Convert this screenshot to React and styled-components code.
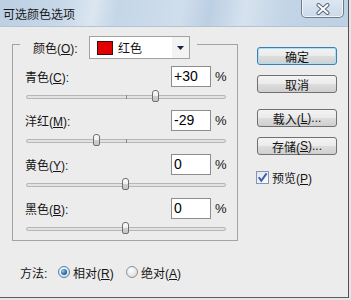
import React from 'react'
import styled, { createGlobalStyle, css } from 'styled-components'

const GlobalStyle = createGlobalStyle`
  html, body {
    margin: 0;
    padding: 0;
    background: #e4e4e4;
  }
  body {
    font-family: "Liberation Sans", "Noto Sans CJK SC", sans-serif;
    font-size: 12px;
    color: #141414;
  }
  u {
    text-decoration: underline;
    text-underline-offset: 1px;
  }
`

const rows = [
  { label: '青色', key: 'C', value: 30 },
  { label: '洋红', key: 'M', value: -29 },
  { label: '黄色', key: 'Y', value: 0 },
  { label: '黑色', key: 'B', value: 0 },
]

const formatValue = (v) => (v > 0 ? `+${v}` : `${v}`)

const App = () => {
  return (
    <>
      <GlobalStyle />
      <Window>
        <TitleBar>
          <Title>可选颜色选项</Title>
          <CloseButton>
            <svg width="16" height="12" viewBox="0 0 16 12">
              <path d="M3.5 2 L12.5 10 M12.5 2 L3.5 10" stroke="#56677b" strokeWidth="4" strokeLinecap="round" fill="none" />
              <path d="M3.5 2 L12.5 10 M12.5 2 L3.5 10" stroke="#ffffff" strokeWidth="2" strokeLinecap="round" fill="none" />
            </svg>
          </CloseButton>
        </TitleBar>

        <Body>
          <LeftCol>
            <Group>
              <Legend>
                <LegendLabel>颜色(<u>O</u>):</LegendLabel>
                <Select>
                  <Swatch />
                  <SelectText>红色</SelectText>
                  <Arrow>
                    <svg width="7" height="4" viewBox="0 0 7 4">
                      <path d="M0 0 L7 0 L3.5 4 Z" fill="#15254a" />
                    </svg>
                  </Arrow>
                </Select>
              </Legend>

              {rows.map((r) => (
                <Row key={r.key}>
                  <TopLine>
                    <RowLabel>{r.label}(<u>{r.key}</u>):</RowLabel>
                    <NumberBox>{formatValue(r.value)}</NumberBox>
                    <Percent>%</Percent>
                  </TopLine>
                  <Slider>
                    <Track />
                    <Thumb style={{ left: 96 + r.value }} />
                  </Slider>
                </Row>
              ))}
            </Group>

            <MethodRow>
              <MethodLabel>方法:</MethodLabel>
              <Option>
                <Radio $checked />
                <span>相对(<u>R</u>)</span>
              </Option>
              <Option>
                <Radio />
                <span>绝对(<u>A</u>)</span>
              </Option>
            </MethodRow>
          </LeftCol>

          <RightCol>
            <Button $default>确定</Button>
            <Button $gap={10}>取消</Button>
            <Button $gap={16}>载入(<u>L</u>)...</Button>
            <Button $gap={10}>存储(<u>S</u>)...</Button>
            <CheckRow>
              <CheckBox>
                <svg width="11" height="11" viewBox="0 0 11 11">
                  <path d="M1.8 5.2 L4.3 8.8 L9.6 1.4" stroke="#3a5fae" strokeWidth="2" fill="none" />
                </svg>
              </CheckBox>
              <span>预览(<u>P</u>)</span>
            </CheckRow>
          </RightCol>
        </Body>
      </Window>
    </>
  )
}

const Window = styled.div`
  width: 349px;
  height: 298px;
  box-sizing: border-box;
  background: #ececec;
  border-right: 1px solid #4e5256;
  border-bottom: 1px solid #5b5e62;
  display: flex;
  flex-direction: column;
  overflow: hidden;
`

const TitleBar = styled.div`
  height: 27px;
  box-sizing: border-box;
  display: flex;
  justify-content: space-between;
  align-items: flex-start;
  padding: 0 4px 0 3px;
  border-bottom: 1px solid #b2c3d4;
  background: linear-gradient(
    100deg,
    #bccfe3 0%,
    #c7d8e9 18%,
    #dbe6f0 27%,
    #c4d6e8 34%,
    #d0deec 52%,
    #bccfe3 60%,
    #d6e2ee 70%,
    #c2d4e6 82%,
    #bdd0e4 100%
  );
`

const Title = styled.div`
  align-self: center;
  font-family: "Noto Sans CJK SC", sans-serif;
  font-size: 12px;
  color: #1a1a1a;
  margin-top: 1px;
`

const CloseButton = styled.div`
  width: 43px;
  height: 18px;
  box-sizing: border-box;
  border: 1px solid #6a7c90;
  border-top: none;
  border-radius: 0 0 5px 5px;
  background: linear-gradient(#dce7f2, #cbd9e7);
  box-shadow: inset 0 -1px 0 #eef4fa, inset 1px 0 0 #eef4fa, inset -1px 0 0 #eef4fa;
  display: flex;
  align-items: center;
  justify-content: center;
`

const Body = styled.div`
  flex: 1;
  display: flex;
  padding-top: 17px;
`

const LeftCol = styled.div`
  width: 226px;
  margin-left: 12px;
  display: flex;
  flex-direction: column;
`

const Group = styled.div`
  border: 1px solid #a4a4a4;
  display: flex;
  flex-direction: column;
  padding-bottom: 6px;
`

const Legend = styled.div`
  align-self: flex-start;
  display: flex;
  align-items: center;
  margin: -9px 0 0 7px;
  padding: 0 7px 0 13px;
  background: #ececec;
`

const LegendLabel = styled.div`
  width: 56px;
`

const Select = styled.div`
  width: 101px;
  height: 23px;
  box-sizing: border-box;
  border: 1px solid #a2a2a2;
  background: #fff;
  display: flex;
  align-items: center;
  padding-left: 7px;
`

const Swatch = styled.div`
  width: 16px;
  height: 14px;
  box-sizing: border-box;
  border: 1px solid #3a1010;
  background: #e00000;
`

const SelectText = styled.div`
  flex: 1;
  margin-left: 5px;
`

const Arrow = styled.div`
  width: 17px;
  align-self: stretch;
  background: #f3f3f3;
  display: flex;
  align-items: center;
  justify-content: center;
`

const Row = styled.div`
  display: flex;
  flex-direction: column;
  padding: 0 11px 0 12px;
  margin-top: 7px;
  & + & {
    margin-top: 8px;
  }
`

const TopLine = styled.div`
  height: 21px;
  display: flex;
  align-items: center;
`

const RowLabel = styled.div`
  flex: 1;
`

const NumberBox = styled.div`
  width: 40px;
  height: 21px;
  box-sizing: border-box;
  border: 1px solid #8d8d8d;
  background: #fff;
  padding-left: 2px;
  font-size: 14px;
  line-height: 19px;
  color: #000;
`

const Percent = styled.div`
  width: 11px;
  margin-left: 4px;
  font-size: 13px;
`

const Slider = styled.div`
  position: relative;
  width: 200px;
  height: 12px;
  margin: 3px 0 0 1px;
  display: flex;
  align-items: center;
`

const Track = styled.div`
  position: relative;
  flex: 1;
  height: 4px;
  box-sizing: border-box;
  border: 1px solid #b6b6b6;
  border-radius: 2px;
  background: #e2e2e2;
  margin-top: 1px;

  &::after {
    content: '';
    position: absolute;
    left: 99px;
    top: -1px;
    width: 1px;
    height: 4px;
    background: #8a8a8a;
  }
`

const Thumb = styled.div`
  position: absolute;
  top: 0;
  width: 7px;
  height: 12px;
  box-sizing: border-box;
  border: 1px solid #6f6f6f;
  border-radius: 3px 3px 2px 2px;
  background: linear-gradient(#fdfdfd 0%, #f0f0f0 45%, #cfcfcf 55%, #c6c6c6 100%);
`

const MethodRow = styled.div`
  height: 16px;
  margin-top: 23px;
  padding-left: 8px;
  display: flex;
  align-items: center;
`

const MethodLabel = styled.div`
  width: 38px;
`

const Option = styled.div`
  width: 68px;
  display: flex;
  align-items: center;
  gap: 3px;
`

const Radio = styled.div`
  position: relative;
  width: 12px;
  height: 12px;
  box-sizing: border-box;
  border-radius: 50%;
  border: 1px solid #8f9092;
  background: radial-gradient(circle at 40% 35%, #ffffff, #d2d2d2);

  ${(p) =>
    p.$checked &&
    css`
      border-color: #4b7fae;
      &::after {
        content: '';
        position: absolute;
        left: 2px;
        top: 2px;
        width: 6px;
        height: 6px;
        border-radius: 50%;
        background: radial-gradient(circle at 35% 35%, #8fd0f5 0%, #2a76b8 50%, #0c3c70 100%);
      }
    `}
`

const RightCol = styled.div`
  width: 80px;
  margin-left: 19px;
  display: flex;
  flex-direction: column;
  padding-top: 3px;
`

const Button = styled.div`
  height: 18px;
  box-sizing: border-box;
  margin-top: ${(p) => (p.$gap ? `${p.$gap}px` : '0')};
  border: 1px solid #707070;
  border-radius: 3px;
  background: linear-gradient(#f3f3f3 0%, #ebebeb 50%, #dddddd 51%, #cfcfcf 100%);
  display: flex;
  align-items: center;
  justify-content: center;
  font-size: 12px;
  color: #111;

  ${(p) =>
    p.$default &&
    css`
      border-color: #3c7fb1;
      box-shadow: inset 0 0 0 1px #a8e0f8;
    `}
`

const CheckRow = styled.div`
  height: 14px;
  margin: 15px 0 0 -1px;
  display: flex;
  align-items: center;
  gap: 3px;
`

const CheckBox = styled.div`
  width: 13px;
  height: 13px;
  box-sizing: border-box;
  border: 1px solid #8496b0;
  background: linear-gradient(135deg, #dfe6ee, #fdfdfd);
  display: flex;
  align-items: center;
  justify-content: center;
`

export default App
